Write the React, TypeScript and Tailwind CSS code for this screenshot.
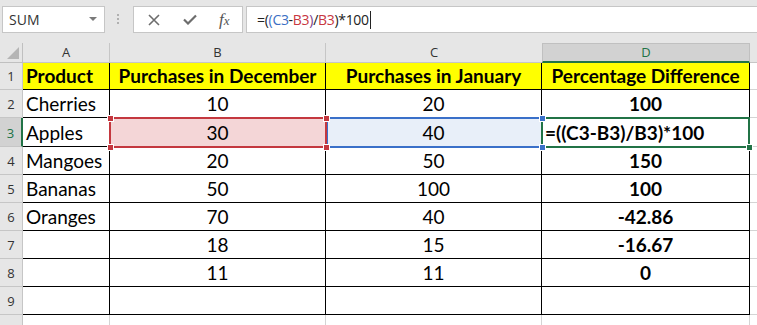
import React from "react";

const cellFont = { fontFamily: "Lato, 'Liberation Sans', sans-serif" };

type Row = {
  n: number;
  a: string;
  b: string;
  c: string;
  d: string;
  h: string;
};

const rows: Row[] = [
  { n: 2, a: "Cherries", b: "10", c: "20", d: "100", h: "h-[28px]" },
  { n: 3, a: "Apples", b: "30", c: "40", d: "=((C3-B3)/B3)*100", h: "h-[29px]" },
  { n: 4, a: "Mangoes", b: "20", c: "50", d: "150", h: "h-[28px]" },
  { n: 5, a: "Bananas", b: "50", c: "100", d: "100", h: "h-[28px]" },
  { n: 6, a: "Oranges", b: "70", c: "40", d: "-42.86", h: "h-[28px]" },
  { n: 7, a: "", b: "18", c: "15", d: "-16.67", h: "h-[28px]" },
  { n: 8, a: "", b: "11", c: "11", d: "0", h: "h-[28px]" },
  { n: 9, a: "", b: "", c: "", d: "", h: "h-[28px]" },
];

function Square({ x, y, color }: { x: number; y: number; color: string }) {
  return (
    <div
      className="absolute w-[7px] h-[7px] border border-white"
      style={{ left: x - 3, top: y - 3, background: color }}
    />
  );
}

export default function App() {
  return (
    <div
      className="relative w-[757px] h-[325px] overflow-hidden bg-[#e6e6e6]"
      style={{ fontFamily: "'Open Sans', 'Noto Sans', sans-serif" }}
    >
      {/* Formula bar */}
      <div className="flex h-[43px] items-start pt-[6px]">
        <div className="ml-[2px] flex h-[27px] w-[103px] items-center justify-between border border-[#c6c6c6] bg-white pl-[6px] pr-[7px]">
          <span className="text-[14px] text-[#333]">SUM</span>
          <svg width="8" height="5" viewBox="0 0 8 5">
            <path d="M0 0 L8 0 L4 4 Z" fill="#7a7a7a" />
          </svg>
        </div>
        <div className="ml-[12px] mt-[8px] flex flex-col gap-[2px]">
          <div className="h-[2px] w-[2px] bg-[#b0b0b0]" />
          <div className="h-[2px] w-[2px] bg-[#b0b0b0]" />
          <div className="h-[2px] w-[2px] bg-[#b0b0b0]" />
        </div>
        <div className="ml-[14px] flex h-[27px] w-[110px] items-center border border-[#c6c6c6] bg-white">
          <svg className="ml-[14px]" width="12" height="12" viewBox="0 0 12 12">
            <path d="M1 1 L11 11 M11 1 L1 11" stroke="#6d6d6d" strokeWidth="1.6" />
          </svg>
          <svg className="ml-[23px]" width="14" height="11" viewBox="0 0 14 11">
            <path d="M1 5.5 L5 9.5 L13 1.5" stroke="#6d6d6d" strokeWidth="2.2" fill="none" />
          </svg>
          <span
            className="ml-[22px] text-[17px] italic text-[#555]"
            style={{ fontFamily: "'Liberation Serif', serif" }}
          >
            f<span className="text-[13px]">x</span>
          </span>
        </div>
        <div className="ml-[3px] flex h-[27px] flex-1 items-center border border-r-0 border-[#c6c6c6] bg-white pl-[10px]">
          <span className="text-[14px] tracking-[-0.3px] text-[#222]">
            =(<span className="text-[#3b6fc4]">(C3</span>-<span className="text-[#c8373f]">B3</span>
            <span className="text-[#7a3f8c]">)</span>/<span className="text-[#c8373f]">B3</span>)*100
          </span>
          <div className="ml-[1px] h-[18px] w-[1px] bg-[#222]" />
        </div>
      </div>

      {/* Column headers */}
      <div className="flex h-[20px] text-[13px] text-[#333]">
        <div className="relative w-[23px] border-r border-b border-[#c0c0c0]">
          <svg className="absolute bottom-[3px] right-[3px]" width="12" height="12" viewBox="0 0 12 12">
            <path d="M12 0 L12 12 L0 12 Z" fill="#b5b5b5" />
          </svg>
        </div>
        <div className="flex w-[87px] items-center justify-center border-r border-b border-[#c6c6c6]">A</div>
        <div className="flex w-[216px] items-center justify-center border-r border-b border-[#c6c6c6]">B</div>
        <div className="flex w-[216px] items-center justify-center border-b border-[#c6c6c6]">C</div>
        <div className="flex w-[208px] items-center justify-center border-x border-t border-[#c0c0c0] border-b-2 border-b-[#217346] bg-[#d2d2d2] text-[#217346]">
          D
        </div>
        <div className="flex-1 border-b border-[#c6c6c6]" />
      </div>

      {/* Row 1 */}
      <div className="flex h-[27px] leading-[24px]" style={cellFont}>
        <div className="flex w-[23px] items-end justify-center border-r border-b border-[#c6c6c6] pb-[3px] text-[13px] leading-[20px] text-[#333]" style={{ fontFamily: "'Open Sans', sans-serif" }}>
          1
        </div>
        <div className="flex w-[87px] items-end border-r border-b border-black bg-[#ffff00] pb-[1px] pl-[3px] text-[19px] font-bold text-black">
          Product
        </div>
        <div className="flex w-[216px] items-end justify-center border-r border-b border-black bg-[#ffff00] pb-[1px] text-[19px] font-bold text-black">
          Purchases in December
        </div>
        <div className="flex w-[216px] items-end justify-center border-r border-b border-black bg-[#ffff00] pb-[1px] text-[19px] font-bold text-black">
          Purchases in January
        </div>
        <div className="flex w-[208px] items-end justify-center border-r border-b border-black bg-[#ffff00] pb-[1px] text-[19px] font-bold text-black">
          Percentage Difference
        </div>
        <div className="flex-1 border-b border-[#d4d4d4] bg-white" />
      </div>

      {rows.map((r) => {
        const sel = r.n === 3;
        return (
          <div key={r.n} className={`flex ${r.h} leading-[24px]`} style={cellFont}>
            <div
              className={
                sel
                  ? "flex w-[23px] items-end justify-center border-r-2 border-b border-r-[#217346] border-b-[#c6c6c6] bg-[#d2d2d2] pb-[3px] text-[13px] leading-[20px] text-[#217346]"
                  : "flex w-[23px] items-end justify-center border-r border-b border-[#c6c6c6] pb-[3px] text-[13px] leading-[20px] text-[#333]"
              }
              style={{ fontFamily: "'Open Sans', sans-serif" }}
            >
              {r.n}
            </div>
            <div className="flex w-[87px] items-end border-r border-b border-black bg-white pb-[1px] pl-[3px] text-[19px] text-black">
              {r.a}
            </div>
            <div
              className={
                sel
                  ? "flex w-[216px] items-end justify-center border-r border-b border-black bg-[#f4d6d7] pb-[1px] text-[19px] text-black"
                  : "flex w-[216px] items-end justify-center border-r border-b border-black bg-white pb-[1px] text-[19px] text-black"
              }
            >
              {r.b}
            </div>
            <div
              className={
                sel
                  ? "flex w-[216px] items-end justify-center border-r border-b border-black bg-[#e8eff9] pb-[1px] text-[19px] text-black"
                  : "flex w-[216px] items-end justify-center border-r border-b border-black bg-white pb-[1px] text-[19px] text-black"
              }
            >
              {r.c}
            </div>
            <div
              className={
                sel
                  ? "flex w-[208px] items-end border-r border-b border-black bg-white pb-[1px] pl-[3px] text-[19px] font-bold text-black"
                  : "flex w-[208px] items-end justify-center border-r border-b border-black bg-white pb-[1px] text-[19px] font-bold text-black"
              }
            >
              {r.d}
            </div>
            <div className="flex-1 border-b border-[#d4d4d4] bg-white" />
          </div>
        );
      })}

      {/* Row 10 */}
      <div className="flex h-[11px]">
        <div className="w-[23px] border-r border-[#c6c6c6]" />
        <div className="w-[87px] border-r border-[#d4d4d4] bg-white" />
        <div className="w-[216px] border-r border-[#d4d4d4] bg-white" />
        <div className="w-[216px] border-r border-[#d4d4d4] bg-white" />
        <div className="w-[208px] border-r border-[#d4d4d4] bg-white" />
        <div className="flex-1 bg-white" />
      </div>

      {/* Selection overlays */}
      <div className="absolute left-[326px] top-[117px] h-[31px] w-[217px] border-2 border-[#3a70c9]" />
      <div className="absolute left-[109px] top-[117px] h-[31px] w-[218px] border-2 border-[#c4383f]" />
      <div className="absolute left-[541px] top-[117px] h-[31px] w-[209px] border-2 border-[#217346]" />
      <Square x={542} y={118} color="#3a70c9" />
      <Square x={542} y={147} color="#3a70c9" />
      <Square x={110} y={118} color="#c4383f" />
      <Square x={326} y={118} color="#c4383f" />
      <Square x={110} y={147} color="#c4383f" />
      <Square x={326} y={147} color="#c4383f" />
      <Square x={749} y={147} color="#217346" />
    </div>
  );
}
